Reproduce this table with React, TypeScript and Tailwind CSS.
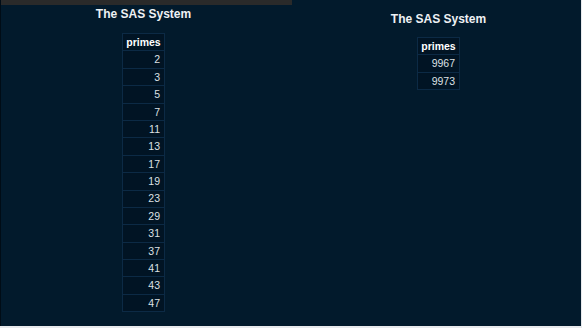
const leftPrimes = [2, 3, 5, 7, 11, 13, 17, 19, 23, 29, 31, 37, 41, 43, 47];
const rightPrimes = [9967, 9973];

function PrimesTable({ values }: { values: number[] }) {
  return (
    <table className="border-collapse text-[10.5px] leading-none">
      <thead>
        <tr>
          <th className="h-[17.4px] w-[42px] border border-[#0c2a45] bg-[#011424] p-0 text-center font-bold text-white">
            primes
          </th>
        </tr>
      </thead>
      <tbody>
        {values.map((v) => (
          <tr key={v}>
            <td className="h-[17.4px] w-[42px] border border-[#0c2a45] bg-[#011424] p-0 pr-[4px] text-right text-[#dde1e5]">
              {v}
            </td>
          </tr>
        ))}
      </tbody>
    </table>
  );
}

export default function App() {
  return (
    <div
      className="h-[328px] w-[582px] overflow-hidden bg-[#e8eaed]"
      style={{ fontFamily: '"Liberation Sans", Arial, sans-serif' }}
    >
      <div className="flex h-[326px] w-[581px] border-l border-[#000c16] bg-[#021a2c]">
        {/* left output, scrolled a bit */}
        <div className="flex w-[291px] flex-col">
          <div className="h-[5px] w-full bg-[#2a2a2a]" />
          <div className="flex flex-col items-center pr-[6px]">
            <h1 className="mt-[2px] h-[14px] text-[12px] font-bold leading-[14px] text-[#eef1f4]">
              The SAS System
            </h1>
            <div className="mt-[12px]">
              <PrimesTable values={leftPrimes} />
            </div>
          </div>
        </div>

        {/* right output */}
        <div className="flex flex-1 flex-col items-center pl-[4px]">
          <h1 className="mt-[12px] h-[14px] text-[12px] font-bold leading-[14px] text-[#eef1f4]">
            The SAS System
          </h1>
          <div className="mt-[11px]">
            <PrimesTable values={rightPrimes} />
          </div>
        </div>
      </div>
    </div>
  );
}
